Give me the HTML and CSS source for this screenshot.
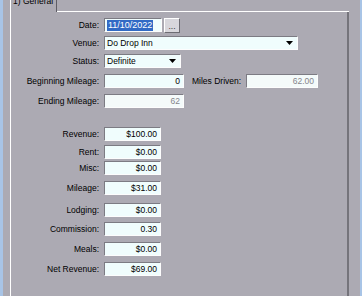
FILE: index.html
```html
<!DOCTYPE html>
<html lang="en">
<head>
    <meta charset="UTF-8">
    <title>Event - General</title>
    <link rel="stylesheet" href="styles.css">
</head>
<body>
    <div class="window">
        <div class="tabs">
            <div class="tab">1) General</div>
            <div class="tab-rest"></div>
        </div>

        <div class="panel">
            <div class="row">
                <span class="lbl">Date:</span>
                <div class="field w-date"><span class="sel">11/10/2022</span></div>
                <div class="btn">...</div>
            </div>
            <div class="row">
                <span class="lbl">Venue:</span>
                <div class="field combo w-venue">
                    <span>Do Drop Inn</span>
                    <svg class="arrow" width="7" height="4" viewBox="0 0 7 4"><path d="M0 0h7L3.5 4z" fill="#000"/></svg>
                </div>
            </div>
            <div class="row">
                <span class="lbl">Status:</span>
                <div class="field combo w-status">
                    <span>Definite</span>
                    <svg class="arrow" width="7" height="4" viewBox="0 0 7 4"><path d="M0 0h7L3.5 4z" fill="#000"/></svg>
                </div>
            </div>
            <div class="row gap-6">
                <span class="lbl">Beginning Mileage:</span>
                <div class="field num w-mile">0</div>
                <span class="lbl-inline">Miles Driven:</span>
                <div class="field num off w-driven">62.00</div>
            </div>
            <div class="row gap-6">
                <span class="lbl">Ending Mileage:</span>
                <div class="field num off w-mile">62</div>
            </div>

            <div class="row gap-section">
                <span class="lbl">Revenue:</span>
                <div class="field num w-money">$100.00</div>
            </div>
            <div class="row">
                <span class="lbl">Rent:</span>
                <div class="field num w-money">$0.00</div>
            </div>
            <div class="row gap-2">
                <span class="lbl">Misc:</span>
                <div class="field num w-money">$0.00</div>
            </div>
            <div class="row gap-6">
                <span class="lbl">Mileage:</span>
                <div class="field num w-money">$31.00</div>
            </div>
            <div class="row gap-8">
                <span class="lbl">Lodging:</span>
                <div class="field num w-money">$0.00</div>
            </div>
            <div class="row gap-5">
                <span class="lbl">Commission:</span>
                <div class="field num w-money">0.30</div>
            </div>
            <div class="row gap-6">
                <span class="lbl">Meals:</span>
                <div class="field num w-money">$0.00</div>
            </div>
            <div class="row gap-6">
                <span class="lbl">Net Revenue:</span>
                <div class="field num w-money">$69.00</div>
            </div>
        </div>
    </div>
</body>
</html>
```

FILE: styles.css
```css
body {
    margin: 0;
    height: 296px;
    overflow: hidden;
    background: #acaab3;
    font-family: "Liberation Sans", Arial, sans-serif;
    font-size: 8.5px;
    color: #000;
    border-left: 3px solid #a8c4e6;
    border-right: 2px solid #a8c4e6;
}

.window {
    padding: 0 11px 0 7px;
}

/* tab strip */
.tabs {
    display: flex;
    height: 12px;
}

.tab {
    width: 47px;
    height: 12px;
    border-left: 1px solid #fff;
    border-right: 1px solid #5f5e66;
    padding-left: 2px;
    line-height: 1;
    margin-top: -3px;
    height: 15px;
    box-sizing: border-box;
    padding-top: 0;
    overflow: hidden;
}

.tab-rest {
    flex: 1;
    border-bottom: 1px solid #fff;
}

/* page */
.panel {
    border-left: 1px solid #fff;
    border-right: 2px solid #75747b;
    min-height: 284px;
    padding-top: 6px;
    box-sizing: border-box;
}

.row {
    display: flex;
    align-items: center;
    height: 14px;
    margin-top: 4px;
}

.row:first-child { margin-top: 0; }
.gap-2 { margin-top: 2px; }
.gap-5 { margin-top: 5px; }
.gap-6 { margin-top: 6px; }
.gap-8 { margin-top: 8px; }
.gap-section { margin-top: 19px; }

.lbl {
    width: 88px;
    margin-right: 5px;
    text-align: right;
    white-space: nowrap;
}

.lbl-inline {
    width: 54px;
    margin-left: 8px;
    white-space: nowrap;
}

.field {
    height: 14px;
    box-sizing: border-box;
    background: #f0fdfd;
    border: 1px solid;
    border-color: #7c7b83 #fdfdfd #fdfdfd #7c7b83;
    display: flex;
    align-items: center;
    padding: 0 3px 0 2px;
    white-space: nowrap;
}

.num {
    justify-content: flex-end;
}

.off {
    color: #85858b;
    background: #f4fafa;
}

.combo {
    justify-content: space-between;
    padding-right: 4px;
}

.arrow {
    display: block;
}

.sel {
    background: #316ac5;
    color: #fff;
    line-height: 11px;
    padding: 0 1px;
    font-size: 9px;
}

.w-date { width: 58px; }
.w-venue { width: 194px; }
.w-status { width: 77px; }
.w-mile { width: 80px; }
.w-driven { width: 72px; }
.w-money { width: 57px; }

.btn {
    width: 16px;
    height: 15px;
    margin-left: 2px;
    box-sizing: border-box;
    background: #d8d7dc;
    border: 1px solid;
    border-color: #fff #6d6c73 #6d6c73 #fff;
    text-align: center;
    line-height: 14px;
    color: #333;
}
```
